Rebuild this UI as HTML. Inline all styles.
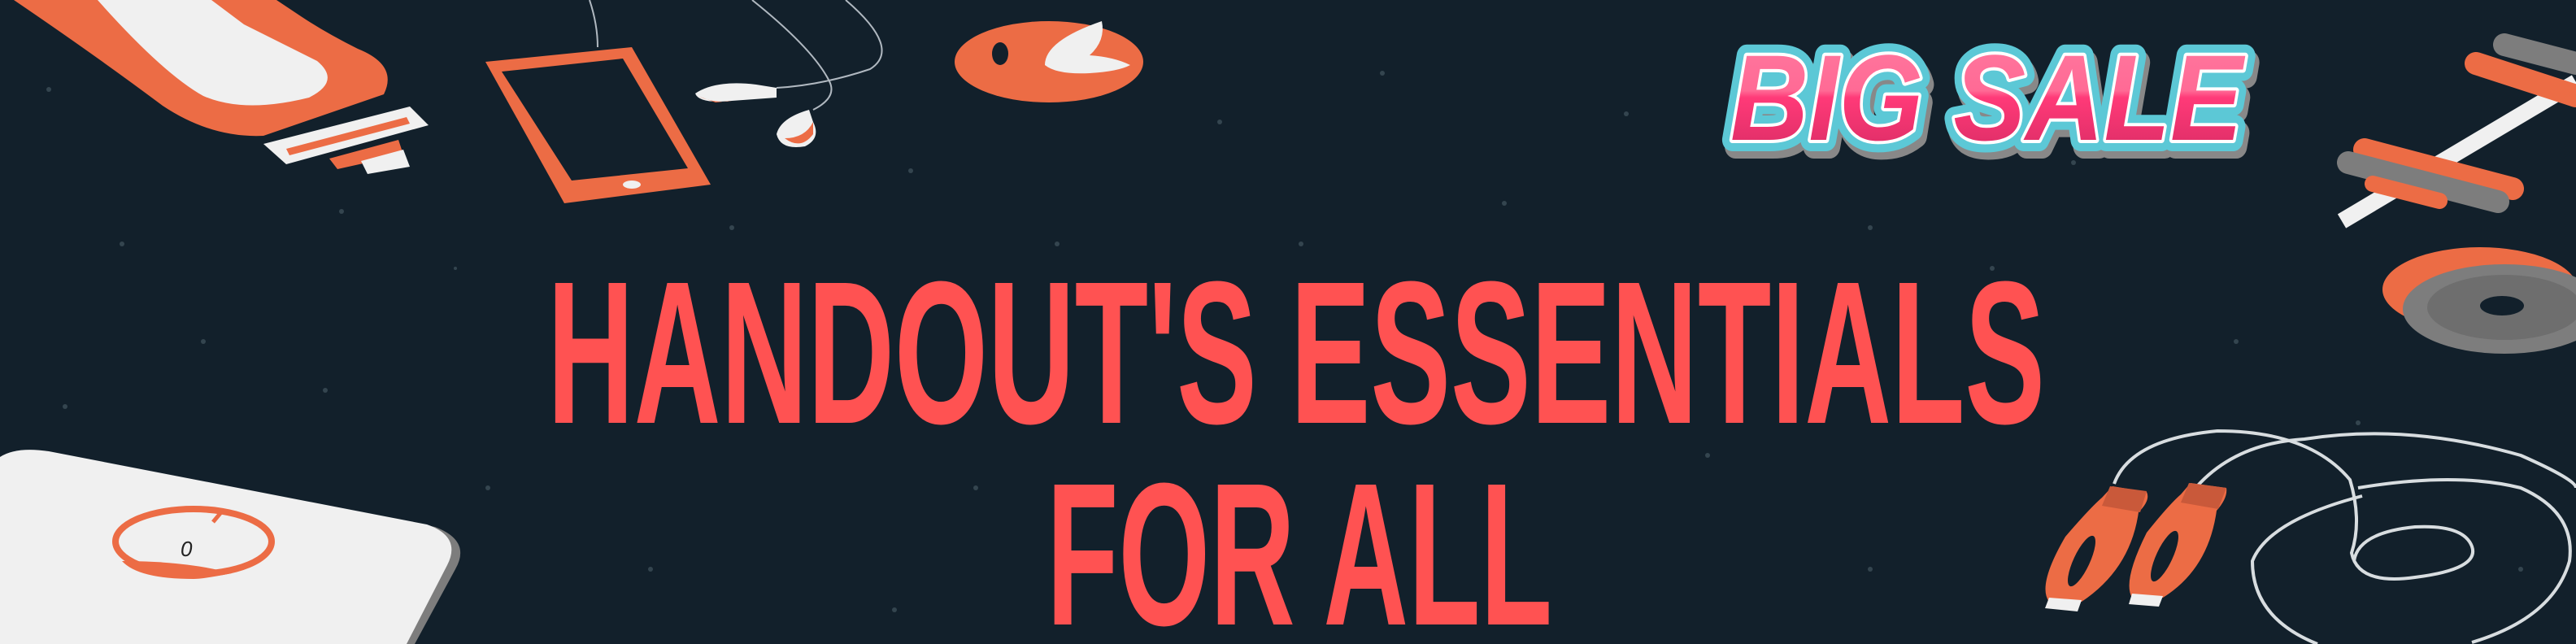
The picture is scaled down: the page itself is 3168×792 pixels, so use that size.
<!DOCTYPE html>
<html><head><meta charset="utf-8"><style>
html,body{margin:0;padding:0;background:#12202b;}
svg{display:block;}
</style></head><body>
<svg width="3168" height="792" viewBox="0 0 3168 792" xmlns="http://www.w3.org/2000/svg">
<defs>
<linearGradient id="pk" x1="0" y1="0" x2="0" y2="1">
<stop offset="0" stop-color="#ff7aa0"/><stop offset="0.45" stop-color="#ff6a95"/><stop offset="0.5" stop-color="#ff3a78"/><stop offset="1" stop-color="#d42a62"/>
</linearGradient>
</defs>
<rect width="3168" height="792" fill="#12202b"/>
<g fill="#34454f">
<circle cx="60" cy="110" r="3"/><circle cx="150" cy="300" r="3"/><circle cx="420" cy="260" r="3"/><circle cx="560" cy="330" r="2"/><circle cx="900" cy="280" r="3"/><circle cx="1120" cy="210" r="3"/><circle cx="1300" cy="300" r="3"/><circle cx="1500" cy="150" r="3"/><circle cx="1700" cy="90" r="3"/><circle cx="1850" cy="250" r="3"/><circle cx="2000" cy="140" r="3"/><circle cx="2300" cy="280" r="3"/><circle cx="2550" cy="200" r="3"/><circle cx="2750" cy="420" r="3"/><circle cx="2100" cy="560" r="3"/><circle cx="1200" cy="600" r="3"/><circle cx="600" cy="600" r="3"/><circle cx="700" cy="450" r="3"/><circle cx="250" cy="420" r="3"/><circle cx="80" cy="500" r="3"/><circle cx="2900" cy="520" r="3"/><circle cx="3100" cy="700" r="3"/><circle cx="2300" cy="700" r="3"/><circle cx="1100" cy="750" r="3"/><circle cx="1600" cy="300" r="3"/><circle cx="2450" cy="330" r="3"/><circle cx="400" cy="480" r="3"/><circle cx="800" cy="700" r="3"/>
</g>
<!-- bottle -->
<path d="M17,0 Q120,70 200,130 Q260,170 324,167 L472,116 Q490,80 440,60 Q400,40 370,20 L340,0 Z" fill="#ec6c45"/>
<path d="M120,0 Q200,90 250,118 Q300,140 380,120 Q420,100 390,75 Q340,50 300,30 L260,0 Z" fill="#f0f0f0"/>
<polygon points="324,177 504,131 527,154 352,202" fill="#f0f0f0"/>
<polygon points="352,183 500,144 504,152 356,191" fill="#ec6c45"/>
<polygon points="405,195 490,172 496,190 415,208" fill="#ec6c45"/>
<polygon points="444,198 496,184 504,205 452,214" fill="#f0f0f0"/>
<!-- phone cables -->
<path d="M725,0 Q735,30 735,58" stroke="#b0b8c0" stroke-width="2" fill="none"/>
<path d="M925,0 Q1000,60 1020,100 Q1030,120 1000,135" stroke="#b0b8c0" stroke-width="2" fill="none"/>
<path d="M1040,0 Q1110,60 1070,85 Q1010,105 955,108" stroke="#b0b8c0" stroke-width="2" fill="none"/>
<!-- phone -->
<polygon points="597,76 777,58 874,227 694,250" fill="#ec6c45"/>
<polygon points="617,88 766,72 846,207 703,222" fill="#12202b"/>
<ellipse cx="777" cy="227" rx="11" ry="5" fill="#f0f0f0"/>
<!-- earbuds -->
<path d="M855,115 Q880,98 930,104 L955,108 L955,120 L900,124 Q860,128 855,115Z" fill="#f0f0f0"/>
<path d="M858,118 Q880,128 900,124 L880,126 Z" fill="#ec6c45"/>
<path d="M995,135 Q960,145 955,165 Q960,185 990,180 Q1010,170 1000,150Z" fill="#f0f0f0"/>
<path d="M965,170 Q985,185 1000,165 L1000,150 Q990,170 965,170Z" fill="#ec6c45"/>
<!-- disc -->
<ellipse cx="1290" cy="76" rx="116" ry="50" fill="#ec6c45"/>
<path d="M1355,26 Q1285,50 1285,80 Q1300,92 1340,90 Q1375,88 1390,80 Q1370,70 1340,68 Q1360,50 1355,26Z" fill="#f0f0f0"/>
<ellipse cx="1230" cy="66" rx="10" ry="14" fill="#12202b"/>
<!-- scale -->
<path d="M0,567 Q20,552 60,558 L535,648 Q580,665 560,700 L510,792 L0,792Z" fill="#7d7d7d"/>
<path d="M0,562 Q20,549 60,555 L525,645 Q568,660 550,695 L500,792 L0,792Z" fill="#f0f0f0"/>
<ellipse cx="238" cy="666" rx="96" ry="40" fill="none" stroke="#ec6c45" stroke-width="8"/>
<path d="M150,690 Q230,690 285,705 Q250,712 238,712 Q170,712 150,690Z" fill="#ec6c45"/>
<line x1="262" y1="642" x2="272" y2="630" stroke="#ec6c45" stroke-width="5"/>
<text x="222" y="684" font-family="Liberation Sans, sans-serif" font-style="italic" font-size="26" fill="#222">0</text>
<!-- title -->
<text x="673" y="520" font-family="Liberation Sans, sans-serif" font-weight="bold" font-size="250" fill="#ff5252" textLength="1842" lengthAdjust="spacingAndGlyphs">HANDOUT'S ESSENTIALS</text>
<text x="1287" y="768" font-family="Liberation Sans, sans-serif" font-weight="bold" font-size="250" fill="#ff5252" textLength="622" lengthAdjust="spacingAndGlyphs">FOR ALL</text>
<!-- big sale -->
<g font-family="Liberation Sans, sans-serif" font-weight="bold" font-style="italic" font-size="150">
<text x="2132" y="180" fill="#888" stroke="#888" stroke-width="30" stroke-linejoin="round" textLength="630" lengthAdjust="spacingAndGlyphs">BIG SALE</text>
<text x="2128" y="172" fill="#5cc8d6" stroke="#5cc8d6" stroke-width="28" stroke-linejoin="round" textLength="630" lengthAdjust="spacingAndGlyphs">BIG SALE</text>
<text x="2128" y="172" fill="url(#pk)" stroke="#fff" stroke-width="8" stroke-linejoin="round" paint-order="stroke" textLength="630" lengthAdjust="spacingAndGlyphs">BIG SALE</text>
</g>
<!-- dumbbell -->
<line x1="2880" y1="272" x2="3168" y2="101" stroke="#f0f0f0" stroke-width="20"/>
<line x1="3080" y1="55" x2="3168" y2="78" stroke="#7d7d7d" stroke-width="28" stroke-linecap="round"/>
<line x1="3045" y1="78" x2="3168" y2="118" stroke="#ec6c45" stroke-width="28" stroke-linecap="round"/>
<line x1="2908" y1="184" x2="3090" y2="232" stroke="#ec6c45" stroke-width="28" stroke-linecap="round"/>
<line x1="2888" y1="200" x2="3072" y2="248" stroke="#7d7d7d" stroke-width="28" stroke-linecap="round"/>
<line x1="2918" y1="226" x2="3000" y2="247" stroke="#ec6c45" stroke-width="20" stroke-linecap="round"/>
<!-- plate -->
<ellipse cx="3050" cy="356" rx="120" ry="52" fill="#ec6c45"/>
<ellipse cx="3080" cy="380" rx="125" ry="55" fill="#7d7d7d"/>
<ellipse cx="3080" cy="378" rx="95" ry="40" fill="#6e6e6e"/>
<ellipse cx="3077" cy="376" rx="27" ry="12" fill="#12202b"/>
<!-- rope -->
<g stroke="#d8dde0" stroke-width="4" fill="none">
<path d="M2600,595 Q2620,540 2727,530 Q2840,530 2890,590 Q2905,640 2892,680 Q2900,720 2970,710 Q3050,700 3040,672 Q3030,645 2970,648 Q2900,655 2895,690"/>
<path d="M2702,598 Q2750,545 2834,540 Q2960,520 3100,560 Q3168,590 3168,600"/>
<path d="M2900,600 Q3020,580 3100,600 Q3168,630 3160,690 Q3140,760 3040,790"/>
<path d="M2905,610 Q2790,640 2770,690 Q2770,760 2850,792"/>
</g>
<!-- handles -->
<path d="M2598,598 L2640,605 Q2645,615 2630,630 Q2620,700 2560,740 L2520,740 Q2505,720 2540,660 Q2570,625 2585,612 Z" fill="#ec6c45"/>
<path d="M2595,598 L2640,604 L2632,630 L2585,622 Z" fill="#c9593a"/>
<ellipse cx="2560" cy="690" rx="10" ry="34" transform="rotate(25 2560 690)" fill="#12202b"/>
<path d="M2520,735 L2560,738 L2555,752 L2515,748 Z" fill="#f0f0f0"/>
<path d="M2694,594 L2738,600 Q2740,612 2726,628 Q2716,700 2660,735 L2622,735 Q2610,715 2640,655 Q2668,620 2682,608 Z" fill="#ec6c45"/>
<path d="M2692,594 L2738,600 L2728,626 L2682,618 Z" fill="#c9593a"/>
<ellipse cx="2662" cy="684" rx="10" ry="34" transform="rotate(25 2662 684)" fill="#12202b"/>
<path d="M2622,730 L2660,733 L2655,746 L2618,743 Z" fill="#f0f0f0"/>
</svg>
</body></html>
